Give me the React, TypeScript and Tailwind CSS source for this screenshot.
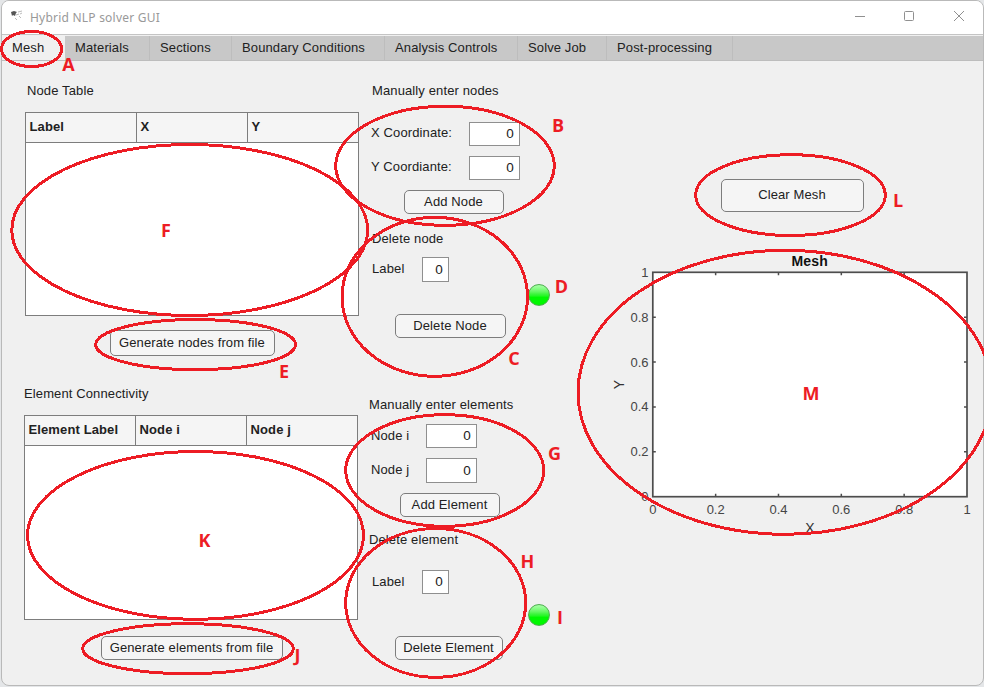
import type { ReactNode } from "react";

const TABS = [
  { name: "Mesh", cls: "w-[63px] bg-[#f0f0f0] border-[#f0f0f0] pl-[10px]" },
  { name: "Materials", cls: "w-[85px] bg-[#c8c8c8] border-[#bdbdbd] pl-[10px]" },
  { name: "Sections", cls: "w-[82px] bg-[#c8c8c8] border-[#bdbdbd] pl-[10px]" },
  { name: "Boundary Conditions", cls: "w-[153px] bg-[#c8c8c8] border-[#bdbdbd] pl-[10px]" },
  { name: "Analysis Controls", cls: "w-[133px] bg-[#c8c8c8] border-[#bdbdbd] pl-[10px]" },
  { name: "Solve Job", cls: "w-[89px] bg-[#c8c8c8] border-[#bdbdbd] pl-[10px]" },
  { name: "Post-processing", cls: "w-[126px] bg-[#c8c8c8] border-[#bdbdbd] pl-[10px]" },
];

function Caption({ className, children }: { className: string; children: ReactNode }) {
  return <div className={`h-5 shrink-0 whitespace-nowrap leading-5 ${className}`}>{children}</div>;
}

function PushButton({ className, children }: { className: string; children: ReactNode }) {
  return (
    <button
      className={`flex shrink-0 items-center justify-center whitespace-nowrap rounded-[5px] border border-[#7d7d7d] bg-[#f5f5f5] pr-px ${className}`}
    >
      {children}
    </button>
  );
}

function Field({
  label,
  className,
  labelClass,
  boxClass,
}: {
  label: string;
  className: string;
  labelClass: string;
  boxClass: string;
}) {
  return (
    <div className={`flex shrink-0 items-start ${className}`}>
      <div className={`shrink-0 whitespace-nowrap leading-[21px] ${labelClass}`}>{label}</div>
      <div
        className={`flex shrink-0 items-center justify-end border border-[#8f8f8f] bg-white pt-px pr-[5px] text-[13.5px] ${boxClass}`}
      >
        0
      </div>
    </div>
  );
}

function DataTable({ className, columns }: { className: string; columns: string[] }) {
  return (
    <div className={`w-[334px] shrink-0 border border-[#7d7d7d] bg-white ${className}`}>
      <div className="grid h-[30px] grid-cols-[111px_111px_110px] border-b border-[#7d7d7d] bg-[#f5f5f5] font-bold">
        {columns.map((name) => (
          <div
            key={name}
            className="whitespace-nowrap border-r border-[#7d7d7d] pl-[3.5px] leading-[28px] last:border-r-0"
          >
            {name}
          </div>
        ))}
      </div>
    </div>
  );
}

function Lamp({ className }: { className: string }) {
  return (
    <div
      className={`size-[22px] shrink-0 rounded-full border border-[#4fae4f] bg-linear-to-b from-[#a0ffa0] from-5% via-[#3cf53c] via-45% to-[#00f800] to-60% ${className}`}
    />
  );
}

function MeshPlot() {
  const ticks = [0.2, 0.4, 0.6, 0.8];
  const left = 52.8;
  const right = 367;
  const top = 32.3;
  const bottom = 256.7;
  const px = (v: number) => left + v * (right - left);
  const py = (v: number) => bottom - v * (bottom - top);
  return (
    <svg width="382" height="305" viewBox="0 0 382 305" className="shrink-0">
      <rect x={left} y={top} width={right - left} height={bottom - top} fill="#fff" stroke="#4d4d4d" strokeWidth="1.7" />
      {ticks.map((t) => (
        <path
          key={t}
          d={`M${px(t)} ${bottom}v-3M${px(t)} ${top}v3M${left} ${py(t)}h3M${right} ${py(t)}h-3`}
          stroke="#4d4d4d"
          strokeWidth="1.5"
        />
      ))}
      {[0, ...ticks, 1].map((t) => (
        <g key={t} fill="#454545" className="text-[13px] tracking-[-0.05px]">
          <text x={px(t)} y="274" textAnchor="middle">{t}</text>
          <text x="48.5" y={py(t) + 4.5} textAnchor="end">{t}</text>
        </g>
      ))}
      <text x="210" y="292.5" textAnchor="middle" fontSize="14" fill="#333">X</text>
      <text transform="translate(24 144.5) rotate(-90)" textAnchor="middle" fontSize="14" fill="#333">Y</text>
      <text x="209.7" y="26" textAnchor="middle" className="text-[14px] tracking-[0.1px]" fontWeight="bold" fill="#111">Mesh</text>
    </svg>
  );
}

// Callout rings: left, right, top and bottom of the stroke's centre line.
const RINGS = [
  [1.5, 61.7, 31.5, 66.5],
  [11.8, 367.7, 144.5, 315.5],
  [335.7, 554.3, 106.3, 225.3],
  [342, 527.5, 217.3, 376.3],
  [95.7, 295.5, 319.5, 369.7],
  [345.7, 543.7, 414.7, 526.3],
  [345.7, 525.7, 528.5, 677.3],
  [82.7, 293.3, 623.7, 673.7],
  [27.5, 363.5, 451.5, 619.3],
  [695.7, 885.3, 154.7, 235.5],
  [578, 992, 250.3, 534.3],
];

const LETTERS: [string, number, number][] = [
  ["A", 68.5, 71],
  ["B", 558, 132],
  ["C", 514, 365],
  ["D", 561.5, 293],
  ["E", 284, 378],
  ["F", 166, 237],
  ["G", 554.5, 460],
  ["H", 527.5, 568],
  ["I", 560, 624],
  ["J", 297.5, 662],
  ["K", 204.5, 547],
  ["L", 898, 207],
  ["M", 811, 400],
];

function Callouts() {
  return (
    <svg className="pointer-events-none absolute inset-0" width="984" height="687" viewBox="0 0 984 687">
      <g fill="none" stroke="#ed1c24" strokeWidth="3" shapeRendering="crispEdges">
        {RINGS.map(([l, r, t, b]) => (
          <ellipse key={`${l}-${t}`} cx={(l + r) / 2} cy={(t + b) / 2} rx={(r - l) / 2} ry={(b - t) / 2} />
        ))}
      </g>
      <g
        className="font-['Open_Sans',sans-serif] tracking-normal"
        fill="#ed1c24"
        fontSize="18"
        fontWeight="700"
        textAnchor="middle"
      >
        {LETTERS.map(([c, x, y]) => (
          <text key={c} x={x} y={y}>{c}</text>
        ))}
      </g>
    </svg>
  );
}

function TitleBar() {
  return (
    <div className="flex h-[34px] shrink-0 items-center border-b border-[#c4c4c4] bg-white">
      <svg width="14" height="12" viewBox="0 0 14 12" className="mb-[3px] ml-[8px]">
        <path d="M1 2l3-1 3 1-1 1-1 3-2-1-1 1z" fill="#555" />
        <path d="M8 2l4-1M6 5l3-1M9 6l2 2M5 8l2 2M10 4l2-1" stroke="#bbb" strokeWidth="1" />
      </svg>
      <div className="ml-[6px] font-['Noto_Sans',sans-serif] text-[12px] tracking-[0.22px] text-[#999]">
        Hybrid NLP solver GUI
      </div>
      <svg
        width="112"
        height="12"
        viewBox="0 0 112 12"
        className="mr-[17px] mb-[3px] ml-auto"
        fill="none"
        stroke="#909090"
      >
        <path d="M1 6.5h10" />
        <rect x="50.5" y="1.5" width="9" height="9" rx="1" />
        <path d="M100 1l10 10M110 1l-10 10" />
      </svg>
    </div>
  );
}

export default function App() {
  return (
    <div className="relative h-[687px] w-[984px] overflow-hidden bg-[#e4e6e8] font-['Liberation_Sans',Arial,sans-serif] text-[13px] tracking-[0.12px] text-[#212121]">
      <div className="ml-px flex h-[686px] w-[983px] flex-col overflow-hidden rounded-[8px] border border-[#b9b9b9] bg-[#f0f0f0]">
        <TitleBar />
        <div className="mt-px flex h-[25px] shrink-0 border-b border-[#bdbdbd] bg-[#c8c8c8]">
          {TABS.map((tab) => (
            <div key={tab.name} className={`shrink-0 whitespace-nowrap border-r leading-[23px] ${tab.cls}`}>
              {tab.name}
            </div>
          ))}
        </div>

        <div className="flex min-h-0 flex-1">
          <section className="flex w-[367px] shrink-0 flex-col pl-[22px]">
            <Caption className="mt-[20px] ml-[3px]">Node Table</Caption>
            <DataTable className="mt-[11px] ml-px h-[204px]" columns={["Label", "X", "Y"]} />
            <PushButton className="mt-[14px] ml-[86px] h-[26px] w-[165px] pb-px">Generate nodes from file</PushButton>
            <Caption className="mt-[28px]">Element Connectivity</Caption>
            <DataTable className="mt-[11px] h-[205px]" columns={["Element Label", "Node i", "Node j"]} />
            <PushButton className="mt-[16px] ml-[77px] h-[24px] w-[182px]">Generate elements from file</PushButton>
          </section>

          <section className="flex w-[159px] shrink-0 flex-col">
            <Caption className="mt-[20px] ml-[3px]">Manually enter nodes</Caption>
            <Field className="mt-[21px] ml-[2px]" label="X Coordinate:" labelClass="w-[98px]" boxClass="h-[24px] w-[51px]" />
            <Field className="mt-[10px] ml-[2px]" label="Y Coordiante:" labelClass="w-[98px]" boxClass="h-[24px] w-[51px]" />
            <PushButton className="mt-[10px] ml-[35px] h-[24px] w-[100px]">Add Node</PushButton>
            <Caption className="mt-[15px] ml-[3px]">Delete node</Caption>
            <Field className="mt-[8px] ml-[3px]" label="Label" labelClass="w-[50px] pt-px" boxClass="h-[25px] w-[27px]" />
            <PushButton className="mt-[32px] ml-[26px] h-[24px] w-[111px]">Delete Node</PushButton>
            <Caption className="mt-[57px]">Manually enter elements</Caption>
            <Field className="mt-[9px] ml-[2px]" label="Node i" labelClass="w-[55px] pt-px" boxClass="h-[24px] w-[51px]" />
            <Field className="mt-[10px] ml-[2px]" label="Node j" labelClass="w-[55px] pt-px" boxClass="h-[25px] w-[51px]" />
            <PushButton className="mt-[10px] ml-[31px] h-[24px] w-[100px]">Add Element</PushButton>
            <Caption className="mt-[13px]">Delete element</Caption>
            <Field className="mt-[20px] ml-[3px]" label="Label" labelClass="w-[50px] pt-px" boxClass="h-[24px] w-[27px]" />
            <PushButton className="mt-[42px] ml-[26px] h-[24px] w-[108px]">Delete Element</PushButton>
          </section>

          <div className="flex w-[72px] shrink-0 flex-col">
            <Lamp className="mt-[223px]" />
            <Lamp className="mt-[298px]" />
          </div>

          <section className="flex w-[382px] shrink-0 flex-col">
            <PushButton className="mt-[118px] ml-[121px] h-[33px] w-[143px] pb-px">Clear Mesh</PushButton>
            <div className="mt-[28px]">
              <MeshPlot />
            </div>
          </section>
        </div>
      </div>
      <Callouts />
    </div>
  );
}
